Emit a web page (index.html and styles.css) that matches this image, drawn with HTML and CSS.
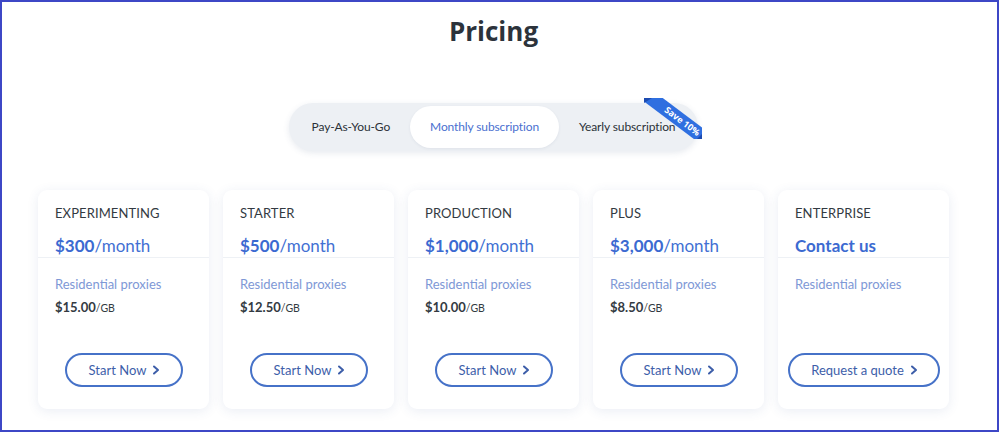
FILE: index.html
```html
<!DOCTYPE html>
<html lang="en">
<head>
<meta charset="utf-8">
<title>Pricing</title>
<link rel="stylesheet" href="styles.css">
</head>
<body>
<div class="frame">
  <div class="wrap">
    <h1 class="title">Pricing</h1>
    <div class="toggle-row">
      <div class="toggle">
        <div class="tab">Pay-As-You-Go</div>
        <div class="tab active">Monthly subscription</div>
        <div class="tab">Yearly subscription</div>
        <div class="ribbon">
          <span class="fold fold-a"></span>
          <span class="fold fold-b"></span>
          <div class="band">Save 10%</div>
        </div>
      </div>
    </div>
    <div class="cards">
      <div class="card">
        <div class="card-head">
          <div class="plan">EXPERIMENTING</div>
          <div class="price"><b>$300</b>/month</div>
        </div>
        <div class="card-body">
          <div class="feature">Residential proxies</div>
          <div class="rate"><b>$15.00</b><span>/GB</span></div>
        </div>
        <a class="btn">Start Now <svg class="chev" viewBox="0 0 8 10" width="8" height="10"><polyline points="2,1.5 6,5 2,8.5"/></svg></a>
      </div>
      <div class="card">
        <div class="card-head">
          <div class="plan">STARTER</div>
          <div class="price"><b>$500</b>/month</div>
        </div>
        <div class="card-body">
          <div class="feature">Residential proxies</div>
          <div class="rate"><b>$12.50</b><span>/GB</span></div>
        </div>
        <a class="btn">Start Now <svg class="chev" viewBox="0 0 8 10" width="8" height="10"><polyline points="2,1.5 6,5 2,8.5"/></svg></a>
      </div>
      <div class="card">
        <div class="card-head">
          <div class="plan">PRODUCTION</div>
          <div class="price"><b>$1,000</b>/month</div>
        </div>
        <div class="card-body">
          <div class="feature">Residential proxies</div>
          <div class="rate"><b>$10.00</b><span>/GB</span></div>
        </div>
        <a class="btn">Start Now <svg class="chev" viewBox="0 0 8 10" width="8" height="10"><polyline points="2,1.5 6,5 2,8.5"/></svg></a>
      </div>
      <div class="card">
        <div class="card-head">
          <div class="plan">PLUS</div>
          <div class="price"><b>$3,000</b>/month</div>
        </div>
        <div class="card-body">
          <div class="feature">Residential proxies</div>
          <div class="rate"><b>$8.50</b><span>/GB</span></div>
        </div>
        <a class="btn">Start Now <svg class="chev" viewBox="0 0 8 10" width="8" height="10"><polyline points="2,1.5 6,5 2,8.5"/></svg></a>
      </div>
      <div class="card">
        <div class="card-head">
          <div class="plan">ENTERPRISE</div>
          <div class="price"><b>Contact us</b></div>
        </div>
        <div class="card-body">
          <div class="feature">Residential proxies</div>
        </div>
        <a class="btn btn-wide">Request a quote <svg class="chev" viewBox="0 0 8 10" width="8" height="10"><polyline points="2,1.5 6,5 2,8.5"/></svg></a>
      </div>
    </div>
  </div>
</div>
</body>
</html>
```

FILE: styles.css
```css
* { box-sizing: border-box; }
html, body { margin: 0; padding: 0; background: #fff; }
body { font-family: Lato, "Open Sans", sans-serif; color: #333a42; }

.frame {
  width: 999px;
  height: 432px;
  border: 2px solid #3d47c6;
  background: #fff;
  overflow: hidden;
}

.wrap {
  width: 911px;
  margin-left: 36px;
}

.title {
  margin: 0;
  padding-top: 13px;
  font-family: "Open Sans", sans-serif;
  font-weight: 700;
  font-size: 26px;
  line-height: 32px;
  color: #2c333b;
  text-align: center;
}

.toggle-row {
  display: flex;
  justify-content: center;
  margin-top: 56px;
}

.toggle {
  position: relative;
  display: flex;
  padding: 3px;
  background: #edf0f4;
  border-radius: 24px;
  box-shadow: 0 2px 6px rgba(60, 80, 120, 0.12);
}

.tab {
  height: 42px;
  line-height: 42px;
  padding: 0 20px;
  font-size: 12px;
  letter-spacing: -0.12px;
  color: #2b3038;
  border-radius: 21px;
  white-space: nowrap;
}
.tab.active {
  background: #fff;
  color: #4a6fcf;
  box-shadow: 0 1px 3px rgba(60, 80, 120, 0.08);
}

.ribbon {
  position: absolute;
  top: -5px;
  right: -4px;
  width: 58px;
  height: 41px;
  overflow: hidden;
}
.band {
  position: absolute;
  left: -15px;
  top: 11px;
  width: 92px;
  height: 14px;
  line-height: 14px;
  background: #2f6fe0;
  color: #fff;
  font-family: "Open Sans", sans-serif;
  font-size: 9px;
  font-weight: 700;
  text-align: center;
  padding-left: 18px;
  transform: rotate(37deg);
}
.fold {
  position: absolute;
  width: 0;
  height: 0;
  z-index: 1;
}
.fold-a {
  left: 0;
  top: 0;
  border-top: 5px solid #1c4bb0;
  border-right: 8px solid transparent;
}
.fold-b {
  right: 0;
  bottom: 0;
  border-right: 5px solid #1c4bb0;
  border-top: 5px solid transparent;
}

.cards {
  display: flex;
  gap: 14px;
  margin-top: 39px;
}

.card {
  width: 171px;
  height: 219px;
  background: #fff;
  border-radius: 9px;
  box-shadow: 0 2px 12px rgba(50, 80, 150, 0.10);
  display: flex;
  flex-direction: column;
}

.card-head {
  padding: 15px 17px 0;
  height: 68px;
  border-bottom: 1px solid #eef1f5;
}
.plan {
  font-size: 13px;
  line-height: 16px;
  color: #333a42;
  letter-spacing: 0.1px;
}
.price {
  margin-top: 15px;
  font-size: 17px;
  line-height: 20px;
  color: #4270d3;
}
.price b { font-weight: 700; color: #3b6ad1; }

.card-body {
  padding: 18px 17px 0;
  flex: 1;
}
.feature {
  font-size: 13px;
  line-height: 16px;
  color: #7e98d6;
}
.rate {
  margin-top: 7px;
  font-size: 13px;
  line-height: 16px;
  color: #333a42;
}
.rate b { font-weight: 700; }
.rate span { font-size: 10.5px; }

.btn {
  align-self: center;
  margin-bottom: 22px;
  width: 118px;
  height: 34px;
  border: 2px solid #4672c8;
  border-radius: 17px;
  display: flex;
  align-items: center;
  justify-content: center;
  gap: 6px;
  font-size: 13px;
  color: #3d5ea9;
  padding-left: 2px;
}
.btn-wide { width: 152px; }
.chev {
  fill: none;
  stroke: #3d5ea9;
  stroke-width: 2;
  stroke-linecap: round;
  stroke-linejoin: round;
}
```
